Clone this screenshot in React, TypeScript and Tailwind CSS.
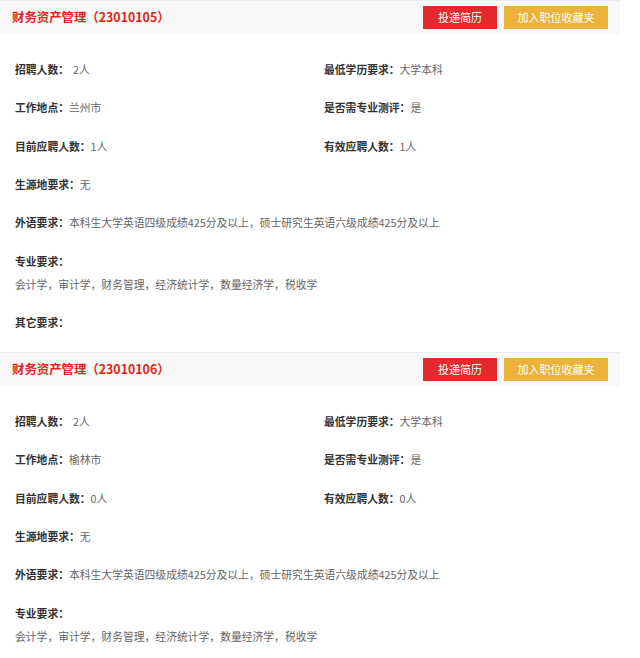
import React from "react";

type Job = {
  title: string;
  code: string;
  count: string;
  edu: string;
  place: string;
  test: string;
  cur: string;
  valid: string;
};

const jobs: Job[] = [
  { title: "财务资产管理", code: "23010105", count: "2人", edu: "大学本科", place: "兰州市", test: "是", cur: "1人", valid: "1人" },
  { title: "财务资产管理", code: "23010106", count: "2人", edu: "大学本科", place: "榆林市", test: "是", cur: "0人", valid: "0人" },
];

const font = { fontFamily: '"Noto Sans CJK SC", "Noto Sans", sans-serif' };

function Field({ label, value, gap }: { label: string; value: string; gap?: boolean }) {
  return (
    <div className="flex items-center h-[38.25px] whitespace-nowrap">
      <span className="font-bold text-[#333333]">{label}</span>
      <span className={gap ? "ml-[4px] text-[#666666]" : "text-[#666666]"}>{value}</span>
    </div>
  );
}

function Card({ job }: { job: Job }) {
  return (
    <div className="h-[352px] w-[620px]">
      <div className="h-[34px] bg-[#f8f8f8] border-t border-[#ececec] flex items-center justify-between pl-[12px] pr-[12px]">
        <div className="text-[12.4px] font-bold text-[#e42320]">
          {job.title}（{job.code}）
        </div>
        <div className="flex items-center gap-[7px]">
          <div className="w-[74px] h-[23px] bg-[#e32a2d] text-white text-[11px] flex items-center justify-center">
            投递简历
          </div>
          <div className="w-[104px] h-[23px] bg-[#ebb33b] text-white text-[11px] flex items-center justify-center">
            加入职位收藏夹
          </div>
        </div>
      </div>
      <div className="pl-[15px] pt-[16px] text-[10.8px]">
        <div className="grid grid-cols-[309px_1fr]">
          <Field label="招聘人数：" value={job.count} gap />
          <Field label="最低学历要求：" value={job.edu} />
          <Field label="工作地点：" value={job.place} />
          <Field label="是否需专业测评：" value={job.test} />
          <Field label="目前应聘人数：" value={job.cur} />
          <Field label="有效应聘人数：" value={job.valid} />
        </div>
        <Field label="生源地要求：" value="无" />
        <Field label="外语要求：" value="本科生大学英语四级成绩425分及以上，硕士研究生英语六级成绩425分及以上" />
        <div className="py-[8px]">
          <div className="h-[23px] flex items-center font-bold text-[#333333]">专业要求：</div>
          <div className="h-[23px] flex items-center text-[#666666]">会计学，审计学，财务管理，经济统计学，数量经济学，税收学</div>
        </div>
        <Field label="其它要求：" value="" />
      </div>
    </div>
  );
}

export default function App() {
  return (
    <div className="w-[640px] h-[658px] bg-white overflow-hidden" style={font}>
      {jobs.map((j) => (
        <Card key={j.code} job={j} />
      ))}
    </div>
  );
}
